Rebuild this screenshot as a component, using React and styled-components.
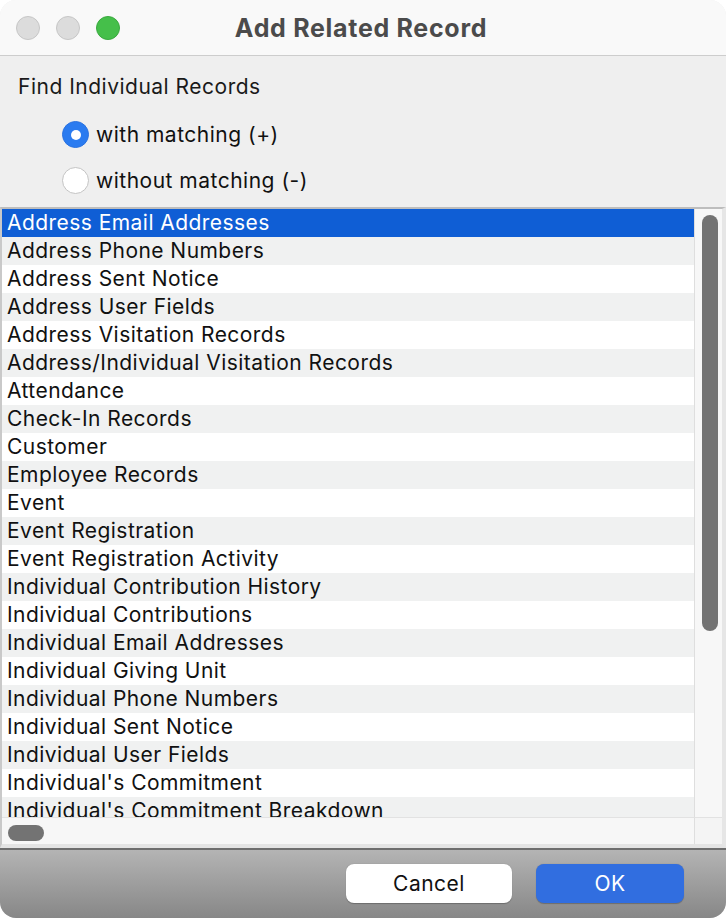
import React, { useState } from "react";
import styled, { createGlobalStyle } from "styled-components";

const GlobalStyle = createGlobalStyle`
  html, body {
    margin: 0;
    padding: 0;
    background: #ffffff;
  }
  body {
    font-family: Inter, "Liberation Sans", sans-serif;
  }
`;

const records = [
  "Address Email Addresses",
  "Address Phone Numbers",
  "Address Sent Notice",
  "Address User Fields",
  "Address Visitation Records",
  "Address/Individual Visitation Records",
  "Attendance",
  "Check-In Records",
  "Customer",
  "Employee Records",
  "Event",
  "Event Registration",
  "Event Registration Activity",
  "Individual Contribution History",
  "Individual Contributions",
  "Individual Email Addresses",
  "Individual Giving Unit",
  "Individual Phone Numbers",
  "Individual Sent Notice",
  "Individual User Fields",
  "Individual's Commitment",
  "Individual's Commitment Breakdown",
];

const Window = styled.div`
  width: 726px;
  height: 918px;
  display: flex;
  flex-direction: column;
  border-radius: 16px;
  overflow: hidden;
  background: #efefef;
`;

const TitleBar = styled.div`
  height: 56px;
  flex: none;
  display: grid;
  grid-template-columns: 1fr auto 1fr;
  align-items: center;
  background: #f9f9f9;
  border-bottom: 1px solid #cdcdcd;
  box-sizing: border-box;
`;

const Lights = styled.div`
  display: flex;
  gap: 16px;
  padding-left: 16px;
`;

const Light = styled.span`
  width: 24px;
  height: 24px;
  border-radius: 50%;
  box-sizing: border-box;
  background: ${(p) => (p.$on ? "#45bf4a" : "#dcdcdc")};
  border: 1px solid ${(p) => (p.$on ? "#3aa93f" : "#c6c6c6")};
`;

const Title = styled.div`
  font-size: 25px;
  font-weight: 700;
  color: #4b4b4b;
  letter-spacing: 0.7px;
  margin-left: -4px;
`;

const Content = styled.div`
  flex: 1;
  display: flex;
  flex-direction: column;
  min-height: 0;
`;

const Heading = styled.div`
  font-size: 21px;
  letter-spacing: 0.5px;
  color: #1a1a1a;
  padding: 18px 0 0 18px;
  height: 31px;
`;

const RadioGroup = styled.div`
  display: flex;
  flex-direction: column;
  gap: 19px;
  padding: 16px 0 13px 62px;
`;

const RadioRow = styled.label`
  display: flex;
  align-items: center;
  gap: 7px;
  font-size: 21px;
  letter-spacing: 0.5px;
  color: #111;
  height: 27px;
  cursor: default;
`;

const RadioDot = styled.span`
  width: 27px;
  height: 27px;
  flex: none;
  border-radius: 50%;
  box-sizing: border-box;
  display: flex;
  align-items: center;
  justify-content: center;
  background: ${(p) => (p.$checked ? "#2a7bf0" : "#ffffff")};
  border: 1px solid ${(p) => (p.$checked ? "#2a72e0" : "#c4c4c4")};

  &::after {
    content: "";
    width: 10px;
    height: 10px;
    border-radius: 50%;
    background: #fff;
    display: ${(p) => (p.$checked ? "block" : "none")};
  }
`;

const ListFrame = styled.div`
  flex: 1;
  min-height: 0;
  display: grid;
  grid-template-columns: 1fr 28px;
  grid-template-rows: 1fr 27px;
  border-top: 2px solid #bdbdbd;
  border-left: 2px solid #c9c9c9;
  border-right: 4px solid #e6e6e6;
  border-bottom: 4px solid #e4e4e4;
  background: #fff;
`;

const List = styled.div`
  overflow: hidden;
  background: #fff;
`;

const Row = styled.div`
  height: 28px;
  line-height: 28px;
  padding-left: 5px;
  font-size: 21px;
  letter-spacing: 0.45px;
  white-space: nowrap;
  color: ${(p) => (p.$selected ? "#ffffff" : "#111")};
  background: ${(p) =>
    p.$selected ? "#0f5ed5" : p.$alt ? "#f0f1f1" : "#ffffff"};
`;

const VTrack = styled.div`
  background: #f7f7f7;
  border-left: 1px solid #dedede;
  padding: 6px 0 0 7px;
`;

const VThumb = styled.div`
  width: 16px;
  height: 416px;
  border-radius: 8px;
  background: #737373;
`;

const HTrack = styled.div`
  background: #f7f7f7;
  border-top: 1px solid #e2e2e2;
  padding: 7px 0 0 6px;
`;

const HThumb = styled.div`
  width: 36px;
  height: 16px;
  border-radius: 8px;
  background: #737373;
`;

const Corner = styled.div`
  background: #f4f4f4;
  border-top: 1px solid #e2e2e2;
  border-left: 1px solid #dedede;
`;

const Footer = styled.div`
  height: 70px;
  flex: none;
  box-sizing: border-box;
  border-top: 2px solid #6e6e6e;
  background: linear-gradient(#b4b4b4, #878787);
  display: flex;
  justify-content: flex-end;
  align-items: center;
  gap: 24px;
  padding: 0 42px 0 0;
`;

const Button = styled.button`
  height: 39px;
  width: ${(p) => p.$w}px;
  border: none;
  border-radius: 8px;
  font-family: inherit;
  font-size: 21px;
  letter-spacing: 0.5px;
  background: ${(p) => (p.$primary ? "#316ee0" : "#ffffff")};
  color: ${(p) => (p.$primary ? "#ffffff" : "#111")};
  box-shadow: 0 0.5px 1px rgba(0, 0, 0, 0.25);
  padding: 0;
  margin-top: -2px;
`;

export default function App() {
  const [mode, setMode] = useState("with");
  const [selected, setSelected] = useState(0);

  return (
    <>
      <GlobalStyle />
      <Window>
        <TitleBar>
          <Lights>
            <Light />
            <Light />
            <Light $on />
          </Lights>
          <Title>Add Related Record</Title>
          <span />
        </TitleBar>
        <Content>
          <Heading>Find Individual Records</Heading>
          <RadioGroup>
            <RadioRow onClick={() => setMode("with")}>
              <RadioDot $checked={mode === "with"} />
              with matching (+)
            </RadioRow>
            <RadioRow onClick={() => setMode("without")}>
              <RadioDot $checked={mode === "without"} />
              without matching (-)
            </RadioRow>
          </RadioGroup>
          <ListFrame>
            <List>
              {records.map((r, i) => (
                <Row
                  key={r}
                  $selected={i === selected}
                  $alt={i % 2 === 1}
                  onClick={() => setSelected(i)}
                >
                  {r}
                </Row>
              ))}
            </List>
            <VTrack>
              <VThumb />
            </VTrack>
            <HTrack>
              <HThumb />
            </HTrack>
            <Corner />
          </ListFrame>
        </Content>
        <Footer>
          <Button $w={166}>Cancel</Button>
          <Button $w={148} $primary>
            OK
          </Button>
        </Footer>
      </Window>
    </>
  );
}
